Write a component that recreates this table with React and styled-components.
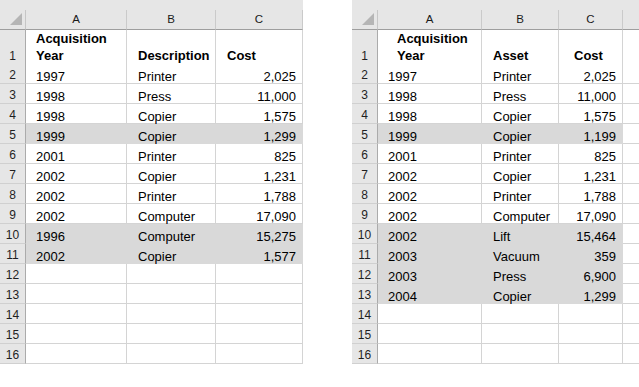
import React from 'react';
import styled, { createGlobalStyle } from 'styled-components';

const GlobalStyle = createGlobalStyle`
  html, body {
    margin: 0;
    padding: 0;
    background: #ffffff;
  }
  body {
    font-family: "Liberation Sans", Arial, sans-serif;
  }
`;

const Page = styled.div`
  display: flex;
  gap: 49px;
  width: 639px;
  height: 387px;
  overflow: hidden;
  background: #ffffff;
`;

const Sheet = styled.div`
  display: flex;
  flex-direction: column;
  flex-shrink: 0;
  width: ${p => p.$width}px;
`;

const TopBand = styled.div`
  height: 10px;
  background: #e6e6e6;
`;

const Row = styled.div`
  display: grid;
  grid-template-columns: ${p => p.$cols};
  height: ${p => p.$height || 20}px;
`;

const Corner = styled.div`
  position: relative;
  box-sizing: border-box;
  background: #e6e6e6;
  border-right: 1px solid #c6c6c6;
  border-bottom: 1px solid #9e9e9e;
  svg {
    position: absolute;
    left: 0;
    top: 0;
  }
`;

const ColHead = styled.div`
  box-sizing: border-box;
  display: flex;
  align-items: flex-end;
  justify-content: center;
  padding-bottom: 4px;
  background: #e6e6e6;
  border-right: 1px solid #cacaca;
  border-bottom: 1px solid #9e9e9e;
  font-size: 11.5px;
  line-height: 11px;
  color: #1a1a1a;
`;

const RowHead = styled.div`
  box-sizing: border-box;
  display: flex;
  align-items: flex-end;
  justify-content: center;
  padding-bottom: 2px;
  background: #e6e6e6;
  border-right: 1px solid #ababab;
  border-bottom: 1px solid #d0d0d0;
  font-size: 12px;
  line-height: 12px;
  color: #1f1f1f;
`;

const Cell = styled.div`
  box-sizing: border-box;
  display: flex;
  align-items: flex-end;
  justify-content: ${p => (p.$right ? 'flex-end' : 'flex-start')};
  padding-left: ${p => p.$pl || 0}px;
  padding-right: ${p => p.$pr || 0}px;
  background: ${p => (p.$hl ? '#d9d9d9' : '#ffffff')};
  border-right: 1px solid ${p => (p.$hl ? '#d9d9d9' : '#d4d4d4')};
  border-bottom: 1px solid ${p => (p.$hl ? '#d9d9d9' : '#d4d4d4')};
  font-size: 13px;
  line-height: 13px;
  color: #000;
  white-space: nowrap;
`;

const TitleCell = styled(Cell)`
  line-height: 17px;
  font-weight: bold;
  white-space: normal;
  padding-bottom: 0;
`;

const leftData = [
  ['1997', 'Printer', '2,025'],
  ['1998', 'Press', '11,000'],
  ['1998', 'Copier', '1,575'],
  ['1999', 'Copier', '1,299', true],
  ['2001', 'Printer', '825'],
  ['2002', 'Copier', '1,231'],
  ['2002', 'Printer', '1,788'],
  ['2002', 'Computer', '17,090'],
  ['1996', 'Computer', '15,275', true],
  ['2002', 'Copier', '1,577', true],
];

const rightData = [
  ['1997', 'Printer', '2,025'],
  ['1998', 'Press', '11,000'],
  ['1998', 'Copier', '1,575'],
  ['1999', 'Copier', '1,199', true],
  ['2001', 'Printer', '825'],
  ['2002', 'Copier', '1,231'],
  ['2002', 'Printer', '1,788'],
  ['2002', 'Computer', '17,090'],
  ['2002', 'Lift', '15,464', true],
  ['2003', 'Vacuum', '359', true],
  ['2003', 'Press', '6,900', true],
  ['2004', 'Copier', '1,299', true],
];

const CornerMark = () => (
  <svg width="26" height="20" viewBox="0 0 26 20">
    <polygon points="10,15 22,3 22,15" fill="#b5b5b5" />
  </svg>
);

const SpreadSheet = ({ cols, width, label, data, titlePad, costPad, extraCol }) => {
  const rows = [];
  for (let n = 2; n <= 16; n++) {
    const r = data[n - 2];
    rows.push(
      <Row key={n} $cols={cols}>
        <RowHead>{n}</RowHead>
        <Cell $pl={10} $hl={r && r[3]}>{r ? r[0] : ''}</Cell>
        <Cell $pl={11} $hl={r && r[3]}>{r ? r[1] : ''}</Cell>
        <Cell $right $pr={6} $hl={r && r[3]}>{r ? r[2] : ''}</Cell>
        {extraCol && <Cell />}
      </Row>
    );
  }
  return (
    <Sheet $width={width}>
      <TopBand />
      <Row $cols={cols}>
        <Corner><CornerMark /></Corner>
        <ColHead>A</ColHead>
        <ColHead>B</ColHead>
        <ColHead>C</ColHead>
        {extraCol && <ColHead />}
      </Row>
      <Row $cols={cols} $height={34}>
        <RowHead>1</RowHead>
        <TitleCell $pl={titlePad}>Acquisition Year</TitleCell>
        <TitleCell $pl={11}>{label}</TitleCell>
        <TitleCell $pl={costPad}>Cost</TitleCell>
        {extraCol && <Cell />}
      </Row>
      {rows}
    </Sheet>
  );
};

export default function App() {
  return (
    <>
      <GlobalStyle />
      <Page>
        <SpreadSheet
          cols="26px 101px 89px 87px"
          width={303}
          label="Description"
          data={leftData}
          titlePad={10}
          costPad={11}
        />
        <SpreadSheet
          cols="26px 104px 77px 64px 60px"
          width={331}
          label="Asset"
          data={rightData}
          titlePad={19}
          costPad={15}
          extraCol
        />
      </Page>
    </>
  );
}
